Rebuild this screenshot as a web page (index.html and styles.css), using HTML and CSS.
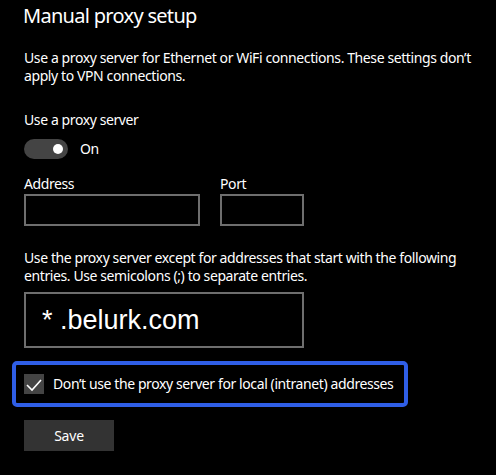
FILE: index.html
```html
<!DOCTYPE html>
<html lang="en">
<head>
    <meta charset="UTF-8">
    <title>Manual proxy setup</title>
    <link rel="stylesheet" href="styles.css">
</head>
<body>
    <h1>Manual proxy setup</h1>

    <p class="intro">Use a proxy server for Ethernet or WiFi connections. These settings don’t apply to VPN connections.</p>

    <div class="label use-label">Use a proxy server</div>
    <div class="toggle-row">
        <div class="toggle"><span class="knob"></span></div>
        <span>On</span>
    </div>

    <div class="fields">
        <div class="field">
            <div class="label">Address</div>
            <div class="box address"></div>
        </div>
        <div class="field">
            <div class="label">Port</div>
            <div class="box port"></div>
        </div>
    </div>

    <p class="except">Use the proxy server except for addresses that start with the following entries. Use semicolons (;) to separate entries.</p>
    <div class="box exceptions">* .belurk.com</div>

    <div class="local">
        <span class="checkbox">
            <svg width="20" height="20" viewBox="0 0 20 20">
                <polyline points="3,11 8,16 17,6" fill="none" stroke="#fff" stroke-width="1.6"/>
            </svg>
        </span>
        <span>Don’t use the proxy server for local (intranet) addresses</span>
    </div>

    <button class="save">Save</button>
</body>
</html>
```

FILE: styles.css
```css
* {
    margin: 0;
    padding: 0;
    box-sizing: border-box;
}

body {
    background: #000;
    color: #fff;
    font-family: "Noto Sans", "Open Sans", sans-serif;
    font-size: 14px;
    line-height: 18px;
    letter-spacing: -0.4px;
    padding: 0 24px;
}

h1 {
    font-size: 20px;
    font-weight: normal;
    line-height: 28px;
    letter-spacing: -0.7px;
    margin-top: 2px;
    margin-left: -1px;
}

.intro {
    margin-top: 19px;
    max-width: 460px;
}

.use-label {
    margin-top: 26px;
}

.toggle-row {
    margin-top: 10px;
    display: flex;
    align-items: center;
    gap: 12px;
    height: 20px;
}

.toggle {
    width: 44px;
    height: 20px;
    border-radius: 10px;
    background: #444;
    display: flex;
    align-items: center;
    justify-content: flex-end;
    padding-right: 5px;
}

.knob {
    width: 10px;
    height: 10px;
    border-radius: 50%;
    background: #fff;
}

.fields {
    margin-top: 16px;
    display: flex;
    gap: 20px;
}

.field .label {
    margin-bottom: 1px;
}

.box {
    border: 2px solid #6e6e6e;
    height: 32px;
}

.address {
    width: 176px;
}

.port {
    width: 84px;
}

.except {
    margin-top: 23px;
    max-width: 460px;
}

.exceptions {
    margin-top: 7px;
    width: 280px;
    height: 56px;
    font-family: "Liberation Sans", Arial, sans-serif;
    font-size: 27px;
    line-height: 52px;
    letter-spacing: 0;
    padding-left: 16px;
}

.local {
    margin-top: 13px;
    margin-left: -12px;
    width: fit-content;
    display: flex;
    align-items: center;
    gap: 9px;
    border: 4px solid #2f5ee6;
    border-radius: 5px;
    padding: 9px 11px 9px 8px;
}

.checkbox {
    width: 20px;
    height: 20px;
    background: #444;
    display: flex;
}

.save {
    margin-top: 13px;
    width: 90px;
    height: 31px;
    border: none;
    background: #333;
    color: #fff;
    font-family: inherit;
    font-size: 14px;
    letter-spacing: -0.2px;
}
```
